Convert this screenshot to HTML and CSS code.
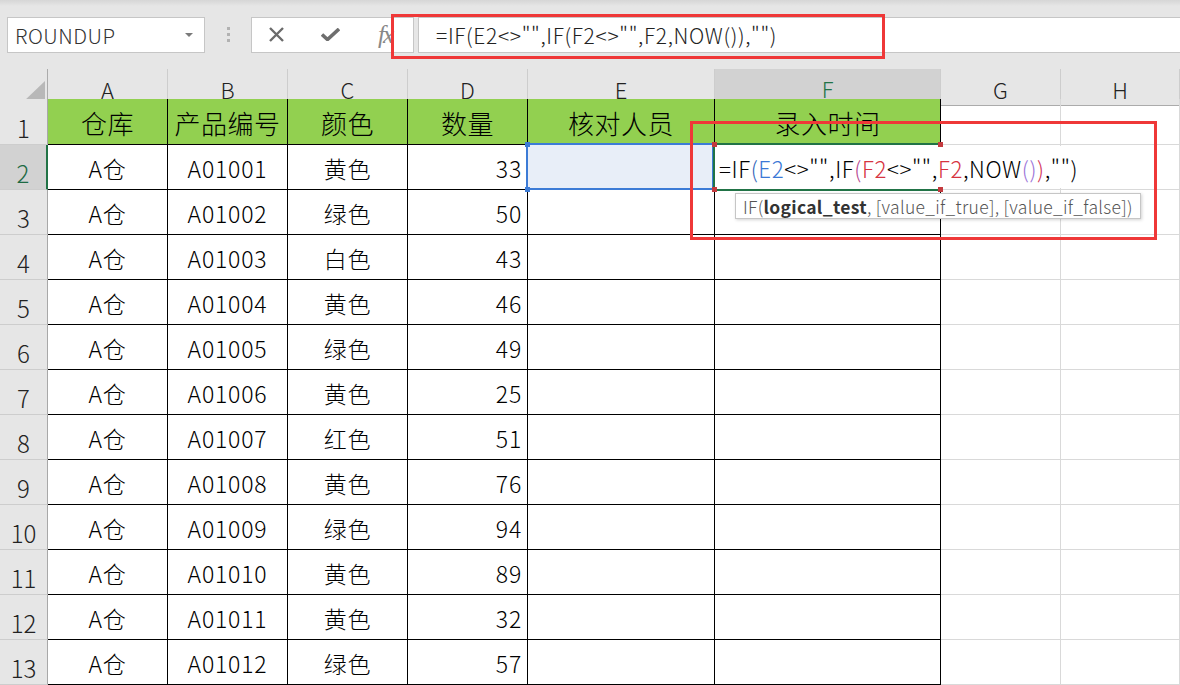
FILE: index.html
```html
<!DOCTYPE html>
<html lang="zh">
  <head>
    <meta charset="UTF-8" />
    <title>录入时间 - Excel</title>
    <link rel="stylesheet" href="styles.css">
  </head>
  <body>
    <div class="app">
      <!-- 编辑栏 -->
      <div class="toolbar">
        <div class="namebox">
          <span>ROUNDUP</span>
          <span class="caret"></span>
        </div>
        <div class="grip"><i></i><i></i><i></i></div>
        <div class="fbuttons">
          <svg class="ic-x" width="17" height="15" viewBox="0 0 17 15">
            <path d="M2 1 L15 14 M15 1 L2 14" stroke="#6b6b6b" stroke-width="2.4" fill="none" />
          </svg>
          <svg class="ic-ok" width="19" height="13" viewBox="0 0 19 13">
            <path d="M1 6.5 L6.5 11.5 L18 1" stroke="#6e6e6e" stroke-width="3.6" fill="none" />
          </svg>
          <span class="fx">fx</span>
        </div>
        <div class="finput">=IF(E2&lt;&gt;"",IF(F2&lt;&gt;"",F2,NOW()),"")</div>
        <div class="callout callout-bar"></div>
      </div>

      <!-- 工作表 -->
      <div class="sheet">
        <div class="row colhead">
          <div class="corner"></div>
          <div class="ch">A</div>
          <div class="ch">B</div>
          <div class="ch">C</div>
          <div class="ch">D</div>
          <div class="ch">E</div>
          <div class="ch on">F</div>
          <div class="ch">G</div>
          <div class="ch">H</div>
        </div>

        <div class="row r1">
          <div class="rh">1</div>
          <div class="c t hd">仓库</div>
          <div class="c t hd">产品编号</div>
          <div class="c t hd">颜色</div>
          <div class="c t hd">数量</div>
          <div class="c t hd">核对人员</div>
          <div class="c t hd">录入时间</div>
          <div class="c g"></div>
          <div class="c g"></div>
        </div>

        <div class="row">
          <div class="rh on">2</div>
          <div class="c t">A仓</div>
          <div class="c t">A01001</div>
          <div class="c t">黄色</div>
          <div class="c t num">33</div>
          <div class="c t sel"></div>
          <div class="c t"></div>
          <div class="c g"></div>
          <div class="c g"></div>
        </div>

        <div class="row">
          <div class="rh">3</div>
          <div class="c t">A仓</div>
          <div class="c t">A01002</div>
          <div class="c t">绿色</div>
          <div class="c t num">50</div>
          <div class="c t"></div>
          <div class="c t"></div>
          <div class="c g"></div>
          <div class="c g"></div>
        </div>

        <div class="row">
          <div class="rh">4</div>
          <div class="c t">A仓</div>
          <div class="c t">A01003</div>
          <div class="c t">白色</div>
          <div class="c t num">43</div>
          <div class="c t"></div>
          <div class="c t"></div>
          <div class="c g"></div>
          <div class="c g"></div>
        </div>

        <div class="row">
          <div class="rh">5</div>
          <div class="c t">A仓</div>
          <div class="c t">A01004</div>
          <div class="c t">黄色</div>
          <div class="c t num">46</div>
          <div class="c t"></div>
          <div class="c t"></div>
          <div class="c g"></div>
          <div class="c g"></div>
        </div>

        <div class="row">
          <div class="rh">6</div>
          <div class="c t">A仓</div>
          <div class="c t">A01005</div>
          <div class="c t">绿色</div>
          <div class="c t num">49</div>
          <div class="c t"></div>
          <div class="c t"></div>
          <div class="c g"></div>
          <div class="c g"></div>
        </div>

        <div class="row">
          <div class="rh">7</div>
          <div class="c t">A仓</div>
          <div class="c t">A01006</div>
          <div class="c t">黄色</div>
          <div class="c t num">25</div>
          <div class="c t"></div>
          <div class="c t"></div>
          <div class="c g"></div>
          <div class="c g"></div>
        </div>

        <div class="row">
          <div class="rh">8</div>
          <div class="c t">A仓</div>
          <div class="c t">A01007</div>
          <div class="c t">红色</div>
          <div class="c t num">51</div>
          <div class="c t"></div>
          <div class="c t"></div>
          <div class="c g"></div>
          <div class="c g"></div>
        </div>

        <div class="row">
          <div class="rh">9</div>
          <div class="c t">A仓</div>
          <div class="c t">A01008</div>
          <div class="c t">黄色</div>
          <div class="c t num">76</div>
          <div class="c t"></div>
          <div class="c t"></div>
          <div class="c g"></div>
          <div class="c g"></div>
        </div>

        <div class="row">
          <div class="rh">10</div>
          <div class="c t">A仓</div>
          <div class="c t">A01009</div>
          <div class="c t">绿色</div>
          <div class="c t num">94</div>
          <div class="c t"></div>
          <div class="c t"></div>
          <div class="c g"></div>
          <div class="c g"></div>
        </div>

        <div class="row">
          <div class="rh">11</div>
          <div class="c t">A仓</div>
          <div class="c t">A01010</div>
          <div class="c t">黄色</div>
          <div class="c t num">89</div>
          <div class="c t"></div>
          <div class="c t"></div>
          <div class="c g"></div>
          <div class="c g"></div>
        </div>

        <div class="row">
          <div class="rh">12</div>
          <div class="c t">A仓</div>
          <div class="c t">A01011</div>
          <div class="c t">黄色</div>
          <div class="c t num">32</div>
          <div class="c t"></div>
          <div class="c t"></div>
          <div class="c g"></div>
          <div class="c g"></div>
        </div>

        <div class="row">
          <div class="rh">13</div>
          <div class="c t">A仓</div>
          <div class="c t">A01012</div>
          <div class="c t">绿色</div>
          <div class="c t num">57</div>
          <div class="c t"></div>
          <div class="c t"></div>
          <div class="c g"></div>
          <div class="c g"></div>
        </div>

        <!-- 引用框 + 正在编辑的单元格 -->
        <div class="ref-box"></div>
        <div class="active-box"></div>
        <div class="editor">=IF<span class="p1">(</span><span class="rb">E2</span>&lt;&gt;"",IF<span class="p2">(</span><span class="rr">F2</span>&lt;&gt;"",<span class="rr">F2</span>,NOW<span class="p3">()</span><span class="p4">)</span>,"")</div>
        <span class="hdl blue hdl-e-top"></span>
        <span class="hdl blue hdl-e-bot"></span>
        <span class="hdl red hdl-f-tl"></span>
        <span class="hdl red hdl-f-tr"></span>
        <span class="hdl red hdl-f-bl"></span>
        <span class="hdl red hdl-f-br"></span>
        <div class="tip">IF(<b>logical_test</b>, [value_if_true], [value_if_false])</div>
        <div class="callout callout-cell"></div>
      </div>
    </div>
  </body>
</html>
```

FILE: styles.css
```css
* {
  box-sizing: border-box;
}

body {
  margin: 0;
  width: 1180px;
  height: 685px;
  overflow: hidden;
  background: #fff;
  font-family: "Noto Sans CJK SC", "Noto Sans", sans-serif;
  color: #000;
}

.app {
  position: relative;
  height: 685px;
  overflow: hidden;
}

/* 编辑栏 */
.toolbar {
  position: relative;
  height: 69px;
  display: flex;
  align-items: center;
  padding-left: 7px;
  background: linear-gradient(#d6d6d6, #e6e6e6 6px);
}

.namebox {
  width: 198px;
  height: 36px;
  background: #fff;
  border: 1px solid #c6c6c6;
  display: flex;
  align-items: center;
  justify-content: space-between;
  padding: 0 11px 0 7px;
  font-size: 20.5px;
  font-weight: 300;
  letter-spacing: 0.5px;
  color: #333;
}

.caret {
  width: 0;
  height: 0;
  border-left: 4px solid transparent;
  border-right: 4px solid transparent;
  border-top: 4px solid #7a7a7a;
}

.grip {
  display: flex;
  flex-direction: column;
  gap: 3px;
  margin: 0 21px 0 22px;
}

.grip i {
  display: block;
  width: 3px;
  height: 3px;
  background: #b2b2b2;
}

.fbuttons {
  width: 163px;
  height: 36px;
  background: #fff;
  border: 1px solid #c6c6c6;
  display: flex;
  align-items: center;
  gap: 36px;
  padding-left: 16px;
}

.fx {
  font-family: "Liberation Serif", serif;
  font-style: italic;
  font-size: 25px;
  color: #888;
  letter-spacing: -2px;
  line-height: 1;
  margin-left: 2px;
}

.finput {
  flex: 1;
  height: 36px;
  margin-left: 4px;
  background: #fff;
  border: 1px solid #c6c6c6;
  border-right: none;
  display: flex;
  align-items: center;
  padding-left: 17px;
  font-size: 21px;
  font-weight: 300;
  letter-spacing: 0.65px;
  color: #222;
}

.callout {
  position: absolute;
  border: 3px solid #ef3838;
}

.callout-bar {
  left: 391px;
  top: 14px;
  width: 494px;
  height: 45px;
}

/* 工作表 */
.sheet {
  position: relative;
}

.row {
  display: grid;
  grid-template-columns: 48px 120px 120px 120px 120px 187px 226px 120px 1fr;
  height: 45px;
}

.row.colhead {
  height: 30px;
}

.row.r1 {
  height: 46px;
}

.corner {
  background: #e6e6e6;
  border-right: 1px solid #ababab;
  border-bottom: 1px solid #ababab;
  display: flex;
  justify-content: flex-end;
  align-items: flex-end;
  padding: 0 2px 3px 0;
}

.corner::after {
  content: "";
  width: 0;
  height: 0;
  border-left: 22px solid transparent;
  border-bottom: 21px solid #b8b8b8;
}

.ch {
  background: #e6e6e6;
  border-right: 1px solid #cdcdcd;
  border-bottom: 1px solid #ababab;
  display: flex;
  align-items: center;
  justify-content: center;
  padding-top: 3px;
  font-size: 22px;
  font-weight: 300;
  color: #222;
}

.ch.on {
  background: #d2d2d2;
  border-bottom: 2px solid #217346;
  color: #217346;
}

.rh {
  background: #e6e6e6;
  border-right: 1px solid #a8a8a8;
  border-bottom: 1px solid #cdcdcd;
  display: flex;
  align-items: flex-end;
  justify-content: center;
  font-size: 24px;
  font-weight: 300;
  line-height: 1;
  padding-bottom: 4px;
  color: #222;
}

.rh.on {
  background: #d2d2d2;
  border-right: 2px solid #217346;
  color: #1d6a44;
}

.c {
  display: flex;
  align-items: center;
  justify-content: center;
  padding-top: 1px;
  font-size: 23px;
  font-weight: 300;
  letter-spacing: 0.8px;
  white-space: nowrap;
}

.t {
  border-right: 1px solid #000;
  border-bottom: 1px solid #000;
}

.g {
  border-right: 1px solid #d9d9d9;
  border-bottom: 1px solid #d9d9d9;
}

.hd {
  background: #92d050;
  font-size: 26px;
  letter-spacing: 0.5px;
  padding-top: 2px;
}

.num {
  justify-content: flex-end;
  padding-right: 5px;
}

.sel {
  background: #e8eef8;
}

/* 引用与编辑 */
.ref-box {
  position: absolute;
  left: 526px;
  top: 74px;
  width: 188px;
  height: 47px;
  border: 2px solid #3c7bd6;
}

.active-box {
  position: absolute;
  left: 713px;
  top: 74px;
  width: 228px;
  height: 48px;
  border: 2px solid #217346;
  border-right: none;
}

.editor {
  position: absolute;
  left: 716px;
  top: 77px;
  height: 42px;
  background: #fff;
  display: flex;
  align-items: center;
  padding: 1px 10px 0 3px;
  font-size: 22.3px;
  font-weight: 300;
  letter-spacing: 0.6px;
  white-space: nowrap;
}

.rb { color: #3b78d6; }
.rr { color: #d6333f; }
.p1 { color: #2f63b8; }
.p2 { color: #b4438e; }
.p3 { color: #9a72d8; }
.p4 { color: #d2335a; }

.hdl {
  position: absolute;
  width: 5px;
  height: 5px;
}

.hdl.blue { background: #3c7bd6; }
.hdl.red { background: #c43a3e; }

.hdl-e-top { left: 525px; top: 73px; }
.hdl-e-bot { left: 525px; top: 118px; }
.hdl-f-tl { left: 712px; top: 73px; }
.hdl-f-tr { left: 938px; top: 73px; }
.hdl-f-bl { left: 712px; top: 118px; }
.hdl-f-br { left: 938px; top: 118px; }

.tip {
  position: absolute;
  left: 735px;
  top: 124px;
  width: 406px;
  height: 26px;
  background: #fff;
  border: 1px solid #c6c6c6;
  box-shadow: 1px 1px 3px rgba(0, 0, 0, 0.18);
  display: flex;
  align-items: center;
  padding-left: 7px;
  font-size: 17.5px;
  font-weight: 300;
  letter-spacing: 0.3px;
  color: #555;
  white-space: nowrap;
}

.tip b {
  font-weight: 700;
  color: #333;
}

.callout-cell {
  left: 690px;
  top: 52px;
  width: 467px;
  height: 119px;
}
```
